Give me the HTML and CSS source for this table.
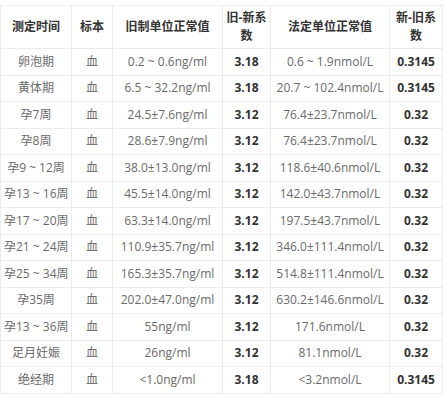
FILE: index.html
```html
<!DOCTYPE html>
<html lang="zh">
<head>
<meta charset="utf-8">
<link rel="stylesheet" href="styles.css">
</head>
<body>
<table class="ref">
  <colgroup>
    <col class="c1"><col class="c2"><col class="c3"><col class="c4"><col class="c5"><col class="c6">
  </colgroup>
  <thead>
    <tr><th>测定时间</th><th>标本</th><th>旧制单位正常值</th><th>旧-新系数</th><th>法定单位正常值</th><th>新-旧系数</th></tr>
  </thead>
  <tbody>
    <tr><td>卵泡期</td><td>血</td><td>0.2 ~ 0.6ng/ml</td><td class="b">3.18</td><td>0.6 ~ 1.9nmol/L</td><td class="b">0.3145</td></tr>
    <tr><td>黄体期</td><td>血</td><td>6.5 ~ 32.2ng/ml</td><td class="b">3.18</td><td>20.7 ~ 102.4nmol/L</td><td class="b">0.3145</td></tr>
    <tr><td>孕7周</td><td>血</td><td>24.5±7.6ng/ml</td><td class="b">3.12</td><td>76.4±23.7nmol/L</td><td class="b">0.32</td></tr>
    <tr><td>孕8周</td><td>血</td><td>28.6±7.9ng/ml</td><td class="b">3.12</td><td>76.4±23.7nmol/L</td><td class="b">0.32</td></tr>
    <tr><td>孕9 ~ 12周</td><td>血</td><td>38.0±13.0ng/ml</td><td class="b">3.12</td><td>118.6±40.6nmol/L</td><td class="b">0.32</td></tr>
    <tr><td>孕13 ~ 16周</td><td>血</td><td>45.5±14.0ng/ml</td><td class="b">3.12</td><td>142.0±43.7nmol/L</td><td class="b">0.32</td></tr>
    <tr><td>孕17 ~ 20周</td><td>血</td><td>63.3±14.0ng/ml</td><td class="b">3.12</td><td>197.5±43.7nmol/L</td><td class="b">0.32</td></tr>
    <tr><td>孕21 ~ 24周</td><td>血</td><td>110.9±35.7ng/ml</td><td class="b">3.12</td><td>346.0±111.4nmol/L</td><td class="b">0.32</td></tr>
    <tr><td>孕25 ~ 34周</td><td>血</td><td>165.3±35.7ng/ml</td><td class="b">3.12</td><td>514.8±111.4nmol/L</td><td class="b">0.32</td></tr>
    <tr><td>孕35周</td><td>血</td><td>202.0±47.0ng/ml</td><td class="b">3.12</td><td>630.2±146.6nmol/L</td><td class="b">0.32</td></tr>
    <tr><td>孕13 ~ 36周</td><td>血</td><td>55ng/ml</td><td class="b">3.12</td><td>171.6nmol/L</td><td class="b">0.32</td></tr>
    <tr><td>足月妊娠</td><td>血</td><td>26ng/ml</td><td class="b">3.12</td><td>81.1nmol/L</td><td class="b">0.32</td></tr>
    <tr><td>绝经期</td><td>血</td><td>&lt;1.0ng/ml</td><td class="b">3.18</td><td>&lt;3.2nmol/L</td><td class="b">0.3145</td></tr>
  </tbody>
</table>
</body>
</html>
```
FILE: styles.css
```css
html, body {
  margin: 0;
  padding: 0;
  background: #fff;
}
body {
  padding-top: 5px;
  font-family: "Open Sans", "Noto Sans CJK SC", sans-serif;
  font-size: 12px;
}
.ref {
  width: 442px;
  border-collapse: collapse;
  table-layout: fixed;
}
.c1 { width: 71px; }
.c2 { width: 41px; }
.c3 { width: 110px; }
.c4 { width: 48px; }
.c5 { width: 119px; }
.c6 { width: 53px; }
.ref th, .ref td {
  border: 1px solid #ececec;
  text-align: center;
  vertical-align: middle;
  padding: 0 3px;
  white-space: nowrap;
}
.ref th {
  height: 42px;
  line-height: 18px;
  font-weight: bold;
  color: #333;
  white-space: normal;
}
.ref td {
  height: 25.5px;
  line-height: 16px;
  color: #6a6a6a;
}
.ref td.b {
  font-weight: bold;
  color: #333;
}
```
